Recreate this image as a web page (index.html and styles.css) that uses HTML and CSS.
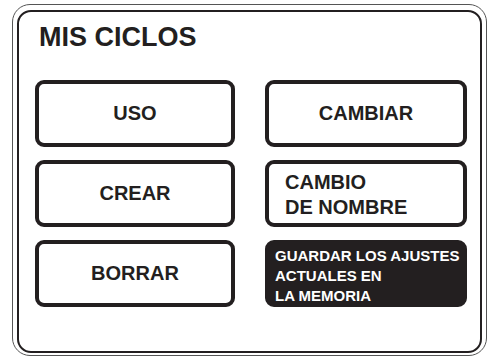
FILE: index.html
```html
<!DOCTYPE html>
<html lang="es">
<head>
    <meta charset="UTF-8">
    <meta name="viewport" content="width=device-width, initial-scale=1.0">
    <title>Mis ciclos</title>
    <link rel="stylesheet" href="styles.css">
</head>
<body>

<div class="frame">
    <div class="panel">
        <h1 class="title">MIS CICLOS</h1>

        <div class="grid">
            <button class="btn">USO</button>
            <button class="btn">CAMBIAR</button>
            <button class="btn">CREAR</button>
            <button class="btn btn-left">CAMBIO<br>DE NOMBRE</button>
            <button class="btn">BORRAR</button>
            <button class="btn btn-dark">GUARDAR LOS AJUSTES<br>ACTUALES EN<br>LA MEMORIA</button>
        </div>
    </div>
</div>

</body>
</html>
```

FILE: styles.css
```css
body {
    margin: 0;
    background-color: #fff;
    font-family: 'Liberation Sans', Arial, sans-serif;
    color: #231f20;
}
.frame {
    box-sizing: border-box;
    width: 475px;
    height: 352px;
    margin: 4px 0 0 12px;
    padding: 5px 4px 2px 4px;
    border: 1px solid #555;
    border-radius: 18px;
}
.panel {
    box-sizing: border-box;
    height: 343px;
    border: 2px solid #231f20;
    border-radius: 14px;
    padding: 9px 0 0 16px;
}
.title {
    margin: 0 0 27px 4px;
    font-size: 27px;
    line-height: 32px;
    font-weight: bold;
}
.grid {
    display: grid;
    grid-template-columns: 200px 202px;
    grid-template-rows: 67px 67px 67px;
    column-gap: 30px;
    row-gap: 13px;
}
.btn {
    box-sizing: border-box;
    display: flex;
    align-items: center;
    justify-content: center;
    margin: 0;
    padding: 0;
    border: 4px solid #231f20;
    border-radius: 9px;
    background-color: #fff;
    color: #231f20;
    font-family: 'Liberation Sans', Arial, sans-serif;
    font-size: 20px;
    font-weight: bold;
    line-height: 25px;
}
.btn-left {
    justify-content: flex-start;
    text-align: left;
    padding: 2px 0 0 16px;
}
.btn-dark {
    justify-content: flex-start;
    text-align: left;
    padding: 4px 0 0 6px;
    background-color: #231f20;
    color: #fff;
    font-size: 15px;
    line-height: 20px;
}
```
